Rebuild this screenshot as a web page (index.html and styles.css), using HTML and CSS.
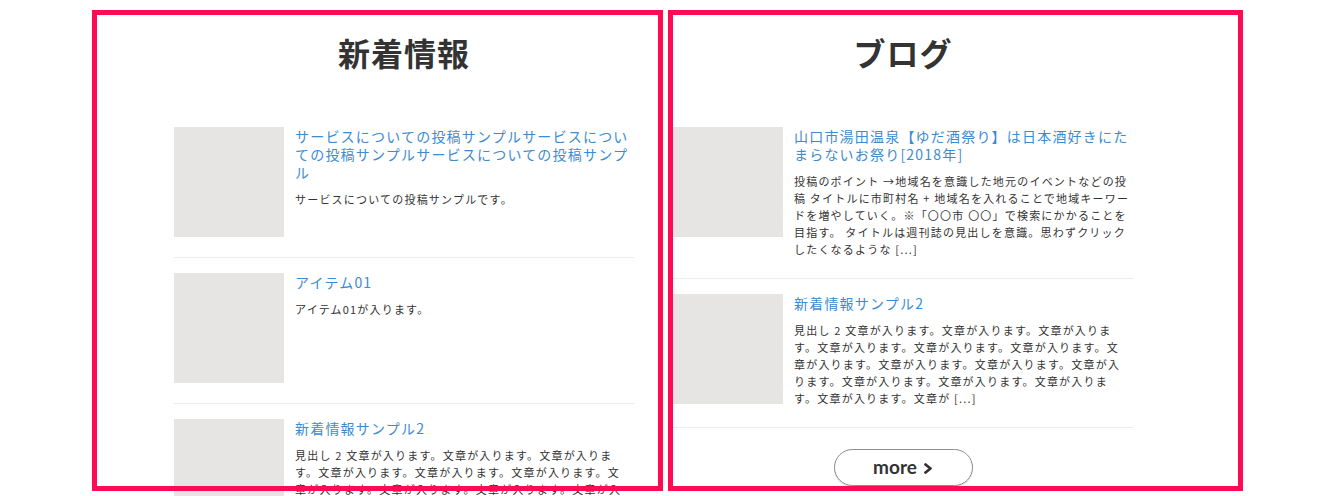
FILE: index.html
```html
<!DOCTYPE html>
<html lang="ja">
<head>
<meta charset="utf-8">
<title>新着情報 / ブログ</title>
<link rel="stylesheet" href="styles.css">
</head>
<body>
<div class="board">
  <section class="col col-news">
    <div class="col-inner">
      <h2 class="col-title">新着情報</h2>
      <ul class="posts">
        <li class="post">
          <div class="thumb"></div>
          <div class="post-body">
            <a class="post-title" href="#">サービスについての投稿サンプルサービスについての投稿サンプルサービスについての投稿サンプル</a>
            <p class="post-text">サービスについての投稿サンプルです。</p>
          </div>
        </li>
        <li class="post">
          <div class="thumb"></div>
          <div class="post-body">
            <a class="post-title" href="#">アイテム01</a>
            <p class="post-text">アイテム01が入ります。</p>
          </div>
        </li>
        <li class="post">
          <div class="thumb"></div>
          <div class="post-body">
            <a class="post-title" href="#">新着情報サンプル2</a>
            <p class="post-text">見出し 2 文章が入ります。文章が入ります。文章が入ります。文章が入ります。文章が入ります。文章が入ります。文章が入ります。文章が入ります。文章が入ります。文章が入ります。文章が入ります。文章が入ります。文章が入ります。文章が入ります。文章が [...]</p>
          </div>
        </li>
      </ul>
    </div>
  </section>
  <section class="col col-blog">
    <div class="col-inner">
      <h2 class="col-title">ブログ</h2>
      <ul class="posts">
        <li class="post">
          <div class="thumb"></div>
          <div class="post-body">
            <a class="post-title" href="#">山口市湯田温泉【ゆだ酒祭り】は日本酒好きにたまらないお祭り[2018年]</a>
            <p class="post-text">投稿のポイント →地域名を意識した地元のイベントなどの投稿 タイトルに市町村名 + 地域名を入れることで地域キーワードを増やしていく。※「〇〇市 〇〇」で検索にかかることを目指す。 タイトルは週刊誌の見出しを意識。思わずクリックしたくなるような [...]</p>
          </div>
        </li>
        <li class="post">
          <div class="thumb"></div>
          <div class="post-body">
            <a class="post-title" href="#">新着情報サンプル2</a>
            <p class="post-text">見出し 2 文章が入ります。文章が入ります。文章が入ります。文章が入ります。文章が入ります。文章が入ります。文章が入ります。文章が入ります。文章が入ります。文章が入ります。文章が入ります。文章が入ります。文章が入ります。文章が入ります。文章が [...]</p>
          </div>
        </li>
      </ul>
      <div class="more-wrap">
        <a class="more-btn" href="#">more<svg class="chev" width="10" height="11" viewBox="0 0 10 11"><polyline points="2.5,1.5 7.5,5.5 2.5,9.5" fill="none" stroke="#333" stroke-width="2.8" stroke-linecap="round" stroke-linejoin="round"/></svg></a>
      </div>
    </div>
  </section>
</div>
</body>
</html>
```
FILE: styles.css
```css
* { box-sizing: border-box; }
html, body { margin: 0; padding: 0; background: #fff; }
body {
  font-family: "Noto Sans CJK JP", "Noto Sans", sans-serif;
  color: #333;
  overflow: hidden;
  height: 496px;
}
.board {
  display: flex;
  gap: 5px;
  margin-left: 92px;
  padding-top: 10px;
}
.col {
  position: relative;
  height: 481px;
}
.col::after {
  content: "";
  position: absolute;
  inset: 0;
  border: 5px solid #ff0a55;
  pointer-events: none;
}
.col-news { width: 571px; padding-left: 82px; }
.col-blog { width: 575px; padding-left: 5px; }
.col-inner {
  width: 460px;
  padding-top: 20px;
}
.col-title {
  margin: 0 0 52px;
  font-size: 32px;
  line-height: 45px;
  font-weight: 700;
  text-align: center;
  color: #333;
  letter-spacing: 1px;
}
.posts {
  list-style: none;
  margin: 0;
  padding: 0;
}
.post {
  display: flex;
  gap: 11px;
  padding-bottom: 20px;
  margin-bottom: 15px;
  border-bottom: 1px solid #ececec;
}
.thumb {
  flex: 0 0 110px;
  width: 110px;
  height: 110px;
  background: #e6e5e3;
}
.post-body { flex: 1; min-width: 0; }
.post-title {
  display: block;
  color: #3d8bd1;
  text-decoration: none;
  font-size: 14px;
  line-height: 18px;
  letter-spacing: 1.2px;
}
.post-text {
  margin: 10px 0 0;
  padding-right: 2px;
  font-size: 11px;
  line-height: 17px;
  letter-spacing: 1.2px;
  color: #333;
}
.more-wrap {
  display: flex;
  justify-content: center;
  margin-top: 21px;
}
.more-btn {
  display: flex;
  align-items: center;
  justify-content: center;
  gap: 6px;
  width: 139px;
  height: 37px;
  border: 1px solid #8c8c8c;
  border-radius: 19px;
  box-shadow: 0 1px 1px rgba(0,0,0,0.15);
  color: #333;
  text-decoration: none;
  font-family: Lato, "Liberation Sans", sans-serif;
  font-weight: 700;
  font-size: 19px;
  line-height: 1;
  padding-bottom: 2px;
}
.chev { display: block; margin-top: 3px; }
```
